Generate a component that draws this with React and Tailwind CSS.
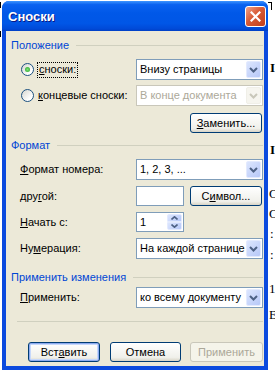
import React from "react";

const ui = "[font-family:'Liberation_Sans',Arial,sans-serif] text-[11px] leading-[13px]";

function Chevron({ color }) {
  return (
    <svg width="9" height="6" viewBox="0 0 9 6">
      <path d="M1 1l3.5 3.5L8 1" fill="none" stroke={color} strokeWidth="2" />
    </svg>
  );
}

function DropBtn({ disabled }) {
  if (disabled) {
    return (
      <div className="m-px flex h-[17px] w-[15px] items-center justify-center rounded-[2px] border border-[#f0efe8] bg-[#f6f5ef]">
        <Chevron color="#c9c7ba" />
      </div>
    );
  }
  return (
    <div className="m-px flex h-[17px] w-[15px] items-center justify-center rounded-[2px] border border-[#e3eafe] bg-[linear-gradient(135deg,#dce6fe,#b7c8f8)]">
      <Chevron color="#4d6185" />
    </div>
  );
}

function Select({ value, disabled }) {
  return (
    <div
      className={
        disabled
          ? "flex h-[21px] w-[127px] items-center border border-[#c9c7ba] bg-white text-[#aca899]"
          : "flex h-[21px] w-[127px] items-center border border-[#7f9db9] bg-white text-black"
      }
    >
      <span className="flex-1 overflow-hidden whitespace-nowrap pl-[3px]">{value}</span>
      <DropBtn disabled={disabled} />
    </div>
  );
}

function Radio({ checked }) {
  return (
    <div className="flex h-[13px] w-[13px] shrink-0 items-center justify-center rounded-full border border-[#1c5180] bg-[linear-gradient(135deg,#d6d5cf,#ffffff_75%)]">
      {checked && (
        <div className="h-[5px] w-[5px] rounded-full bg-[radial-gradient(circle,#7ee27a,#21a121)]" />
      )}
    </div>
  );
}

function Btn({ children, className, kind }) {
  if (kind === "disabled") {
    return (
      <div
        className={`flex h-[20px] items-center justify-center rounded-[3px] border border-[#c9c7ba] bg-[#f5f4ea] text-[#aca899] ${className}`}
      >
        {children}
      </div>
    );
  }
  if (kind === "default") {
    return (
      <div
        className={`flex h-[20px] items-center justify-center rounded-[3px] border border-[#003c74] bg-[linear-gradient(to_bottom,#ffffff,#f0f0ea_80%,#d8d4c6)] shadow-[inset_0_0_0_1px_#8cabf0,inset_0_0_0_2px_#c6d8fb] ${className}`}
      >
        {children}
      </div>
    );
  }
  return (
    <div
      className={`flex h-[20px] items-center justify-center rounded-[3px] border border-[#003c74] bg-[linear-gradient(to_bottom,#ffffff,#f0f0ea_80%,#d8d4c6)] ${className}`}
    >
      {children}
    </div>
  );
}

function Group({ title, className }) {
  return (
    <div className={`flex h-[14px] items-center ${className}`}>
      <span className="text-[#0046d5]">{title}</span>
      <div className="ml-[7px] h-px flex-1 bg-[#d0d0bf]" />
    </div>
  );
}

function Label({ children }) {
  return <div className="w-[125px] pl-[9px]">{children}</div>;
}

export default function App() {
  return (
    <div className={`flex h-[371px] w-[275px] overflow-hidden bg-white ${ui}`}>
      {/* left edge of page behind */}
      <div className="w-[2px] shrink-0">
        <div className="mt-[2px] h-[6px] w-px bg-black" />
        <div className="mt-[23px] h-[6px] w-px bg-black" />
      </div>

      {/* dialog window */}
      <div className="mt-px flex h-[369px] w-[266px] shrink-0 flex-col rounded-t-[7px] bg-[#0b4ade]">
        <div className="flex h-[30px] items-center justify-between rounded-t-[7px] bg-[linear-gradient(to_bottom,#3d95ff_0%,#0a62f0_12%,#0058e8_40%,#0056e6_75%,#004ad8_92%,#003fc6_100%)] pl-[6px] pr-[2px]">
          <span className="text-[13px] font-bold text-white [text-shadow:1px_1px_#0a1883]">Сноски</span>
          <div className="flex h-[21px] w-[21px] items-center justify-center rounded-[3px] border border-white bg-[linear-gradient(135deg,#f0a38a,#d85a36_45%,#c13f1c)]">
            <svg width="11" height="11" viewBox="0 0 11 11">
              <path d="M1.5 1.5l8 8M9.5 1.5l-8 8" stroke="#fff" strokeWidth="2.2" strokeLinecap="square" />
            </svg>
          </div>
        </div>

        <div className="mx-[4px] flex h-[335px] flex-col bg-[#ece9d8] pl-[5px] pr-px text-black">
          <Group title="Положение" className="mt-[7px]" />

          <div className="mt-[7px] flex h-[21px] items-center">
            <div className="flex w-[125px] items-center pl-[10px]">
              <Radio checked />
              <span className="ml-[3px] flex h-[16px] items-center border border-dotted border-black px-px">
                <u>с</u>носки:
              </span>
            </div>
            <Select value="Внизу страницы" />
          </div>

          <div className="mt-[5px] flex h-[21px] items-center">
            <div className="flex w-[125px] items-center pl-[10px]">
              <Radio />
              <span className="ml-[4px]">
                <u>к</u>онцевые сноски:
              </span>
            </div>
            <Select value="В конце документа" disabled />
          </div>

          <div className="mt-[7px] flex justify-end pr-px">
            <Btn className="w-[72px]">
              <span>
                <u>З</u>аменить...
              </span>
            </Btn>
          </div>

          <Group title="Формат" className="mt-[5px]" />

          <div className="mt-[7px] flex h-[21px] items-center">
            <Label>
              <u>Ф</u>ормат номера:
            </Label>
            <Select value="1, 2, 3, ..." />
          </div>

          <div className="mt-[6px] flex h-[20px] items-center">
            <Label>
              дру<u>г</u>ой:
            </Label>
            <div className="h-[20px] w-[48px] border border-[#7f9db9] bg-white" />
            <Btn className="ml-[6px] w-[72px]">
              <span>
                С<u>и</u>мвол...
              </span>
            </Btn>
          </div>

          <div className="mt-[6px] flex h-[20px] items-center">
            <Label>
              <u>Н</u>ачать с:
            </Label>
            <div className="flex h-[20px] w-[48px] items-center border border-[#7f9db9] bg-white">
              <span className="flex-1 pl-[3px]">1</span>
              <div className="m-px flex h-[16px] w-[15px] flex-col">
                <div className="flex flex-1 items-center justify-center rounded-t-[2px] border border-[#e3eafe] bg-[linear-gradient(135deg,#dce6fe,#b7c8f8)]">
                  <svg width="7" height="4" viewBox="0 0 7 4">
                    <path d="M0.5 3.5L3.5 0.8L6.5 3.5" fill="none" stroke="#4d6185" strokeWidth="1.6" />
                  </svg>
                </div>
                <div className="flex flex-1 items-center justify-center rounded-b-[2px] border border-[#e3eafe] bg-[linear-gradient(135deg,#dce6fe,#b7c8f8)]">
                  <svg width="7" height="4" viewBox="0 0 7 4">
                    <path d="M0.5 0.5L3.5 3.2L6.5 0.5" fill="none" stroke="#4d6185" strokeWidth="1.6" />
                  </svg>
                </div>
              </div>
            </div>
          </div>

          <div className="mt-[6px] flex h-[21px] items-center">
            <Label>
              Ну<u>м</u>ерация:
            </Label>
            <Select value="На каждой странице" />
          </div>

          <Group title="Применить изменения" className="mt-[11px]" />

          <div className="mt-[3px] flex h-[21px] items-center">
            <Label>
              <u>П</u>рименить:
            </Label>
            <Select value="ко всему документу" />
          </div>

          <div className="ml-[6px] mt-[13px] h-px bg-[#d0d0bf]" />

          <div className="mt-[20px] flex">
            <Btn kind="default" className="ml-[17px] w-[72px]">
              <span>
                Вст<u>а</u>вить
              </span>
            </Btn>
            <Btn className="ml-[10px] w-[71px]">Отмена</Btn>
            <Btn kind="disabled" className="ml-[9px] w-[73px]">
              Применить
            </Btn>
          </div>
        </div>
      </div>

      {/* right edge of page behind */}
      <div className="flex w-[7px] shrink-0 flex-col [font-family:'Liberation_Serif',serif] text-[13px] leading-[14px]">
        <div className="mt-[2px] flex">
          <div className="h-px w-[3px] bg-black" />
          <div className="h-[8px] w-px bg-black" />
        </div>
        <div className="ml-[2px] mt-[51px] font-bold">I</div>
        <div className="ml-[2px] mt-[68px] font-bold">I</div>
        <div className="ml-[1px] mt-[30px]">C</div>
        <div className="ml-[1px] mt-[6px]">C</div>
        <div className="ml-[2px] mt-[6px]">:</div>
        <div className="ml-[2px] mt-[7px]">:</div>
        <div className="ml-[1px] mt-[20px]">1</div>
        <div className="ml-[1px] mt-[12px]">E</div>
      </div>
    </div>
  );
}
